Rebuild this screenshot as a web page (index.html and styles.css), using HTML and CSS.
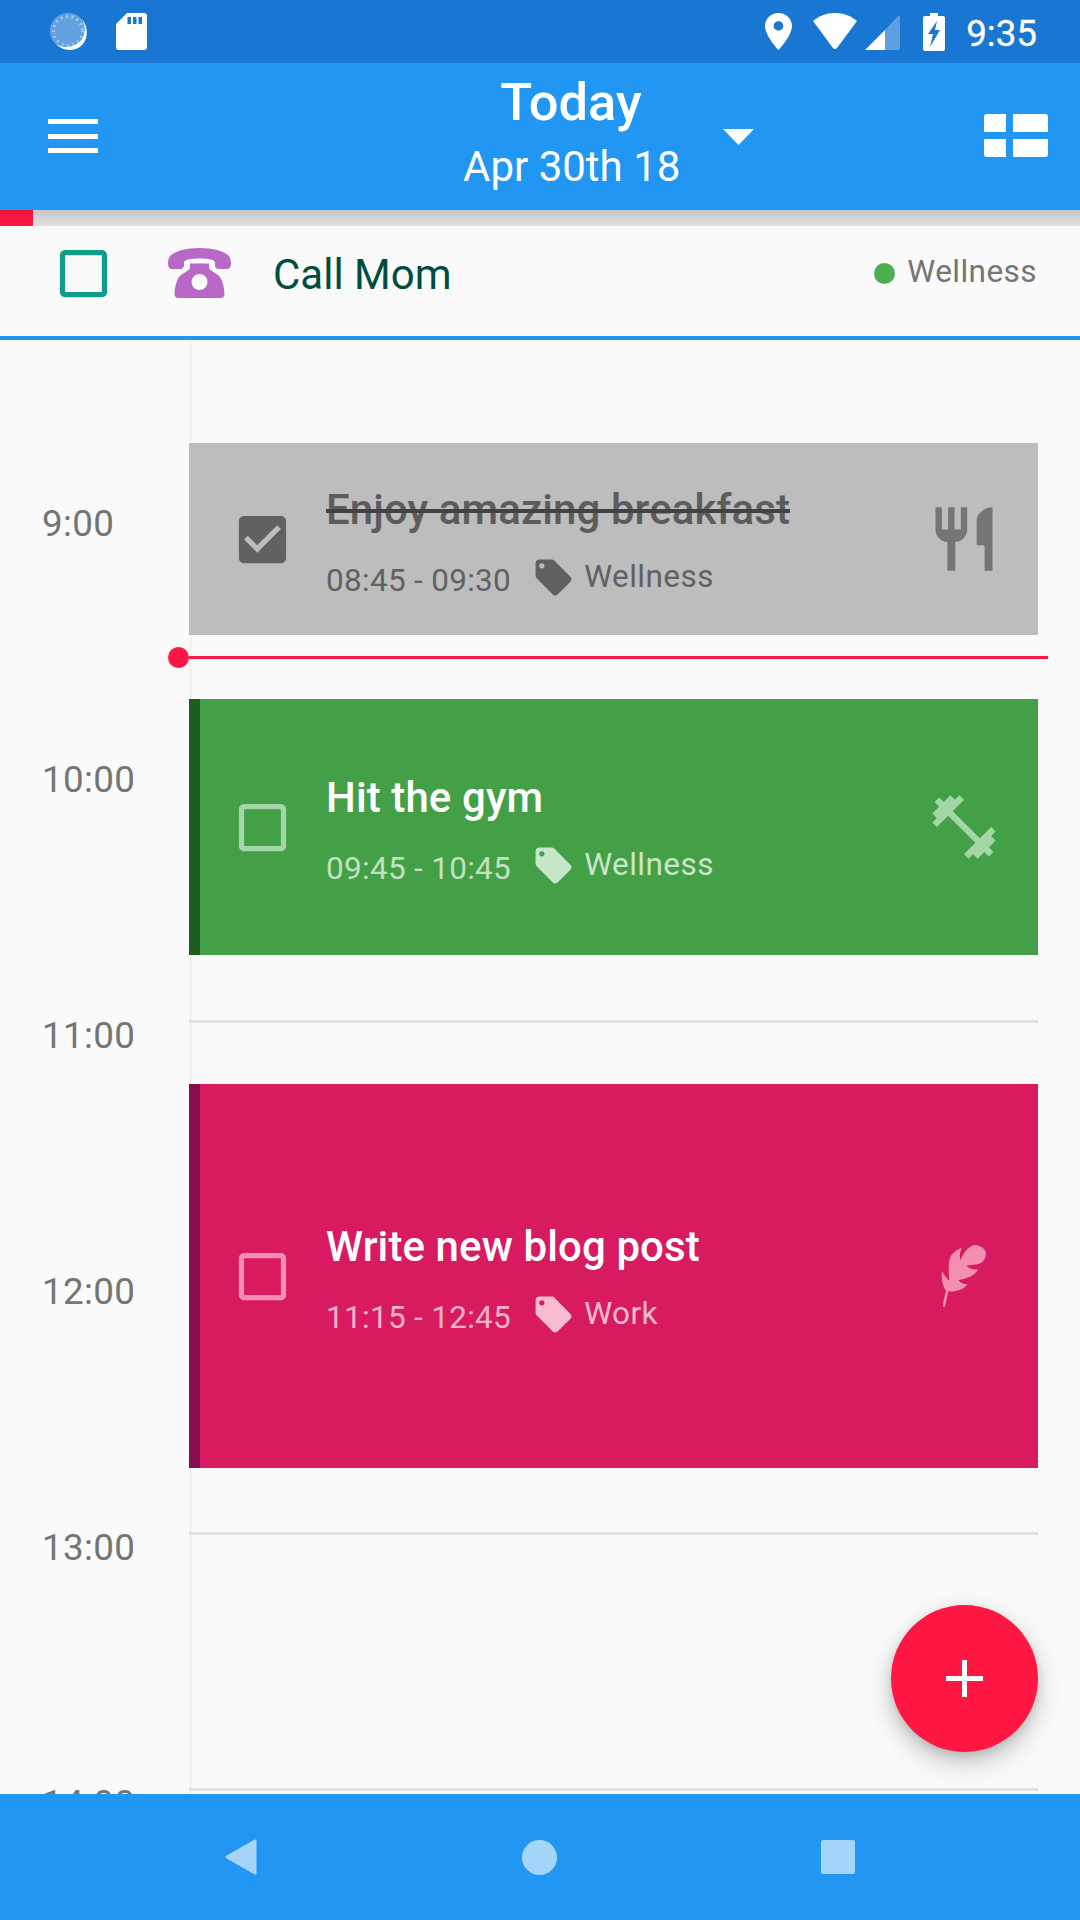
FILE: index.html
```html
<!DOCTYPE html>
<html lang="en">
<head>
<meta charset="utf-8">
<title>Today</title>
<link rel="stylesheet" href="styles.css">
</head>
<body>
<div class="screen">
  <header class="status-bar">
    <svg class="ic-sync" viewBox="0 0 38 38">
      <circle class="sync-disc" cx="18" cy="18" r="18"/>
      <circle class="sync-ticks" cx="18" cy="18" r="14.5"/>
      <path class="sync-moon" d="M32 6C37 15 35 26 27 31 20 35 12 35 6 31 12 38 24 39 31 33 38 27 39 14 32 6Z"/>
    </svg>
    <svg class="ic-sd" viewBox="0 0 31 37">
      <path fill-rule="evenodd" d="M11 0H28a3 3 0 0 1 3 3V34a3 3 0 0 1-3 3H3a3 3 0 0 1-3-3V11ZM11.500 4V11H15V4ZM17 4V11H20.500V4ZM22.500 4V11H26V4Z"/>
    </svg>
    <div class="status-right">
      <svg class="ic-pin" viewBox="5 2 14 20" preserveAspectRatio="none">
        <path d="M12 2C8.130 2 5 5.130 5 9c0 5.250 7 13 7 13s7-7.750 7-13c0-3.870-3.130-7-7-7zm0 9.500c-1.380 0-2.500-1.120-2.500-2.500s1.120-2.500 2.500-2.500 2.500 1.120 2.500 2.500-1.120 2.500-2.500 2.500z"/>
      </svg>
      <div class="radio-group">
        <svg class="ic-wifi" viewBox="0 0 44 37">
          <path d="M22 0C31 0 38 3 44 8L24 35Q22 37 20 35L0 8C6 3 13 0 22 0Z"/>
        </svg>
        <svg class="ic-signal" viewBox="0 0 35 35">
          <path d="M0 35L20 15V35Z"/>
          <path class="signal-dim" d="M20 15L33 1Q35 0 35 2V33Q35 35 33 35H20Z"/>
        </svg>
      </div>
      <svg class="ic-battery" viewBox="0 0 22 38">
        <path fill-rule="evenodd" d="M7 0h8v3h5a2 2 0 0 1 2 2V36a2 2 0 0 1-2 2H2a2 2 0 0 1-2-2V5a2 2 0 0 1 2-2h5ZM14 8L5 21H10L7 34L17 17H12Z"/>
      </svg>
      <span class="clock">9:35</span>
    </div>
  </header>

  <div class="app-bar">
    <div class="menu-icon"><i></i><i></i><i></i></div>
    <div class="title-block">
      <div class="title">Today</div>
      <div class="subtitle">Apr 30th 18</div>
    </div>
    <svg class="ic-drop" viewBox="0 0 31 16"><path d="M0 0H31L15.500 16Z"/></svg>
    <div class="view-icon">
      <i class="narrow tl"></i><i class="wide tr"></i><i class="narrow bl"></i><i class="wide br"></i>
    </div>
  </div>

  <div class="progress-strip"><div class="progress-fill"></div></div>

  <div class="all-day">
    <svg class="check check-teal" viewBox="0 0 24 24">
      <path d="M19 5v14H5V5h14m0-2H5c-1.100 0-2 .9-2 2v14c0 1.100.9 2 2 2h14c1.100 0 2-.9 2-2V5c0-1.100-.9-2-2-2z"/>
    </svg>
    <svg class="ic-phone" viewBox="0 0 63 50">
      <path d="M31.500 0C45 0 56 3 60.500 7.500 62.500 9.500 63 12.500 63 16 63 19 61.500 21 58.500 21H51C48.500 21 47 19.500 47 17V15C47 13 45.500 12 43 11.500 36 10.300 27 10.300 20 11.500 17.500 12 16 13 16 15V17C16 19.500 14.500 21 12 21H4.500C1.500 21 0 19 0 16 0 12.500 .5 9.500 2.500 7.500 7 3 18 0 31.500 0Z"/>
      <path fill-rule="evenodd" d="M22 15.500H41V19.500C41 22 46 24 50 27 54 30 56 38 56.500 46 56.500 49 54.500 50 52 50H11C8.500 50 6.500 49 6.500 46 7 38 9 30 13 27 17 24 22 22 22 19.500ZM31.500 26A8 8 0 1 0 31.500 42 8 8 0 1 0 31.500 26Z"/>
    </svg>
    <span class="all-day-name">Call Mom</span>
    <div class="all-day-tag"><span class="dot-green"></span><span class="all-day-cat">Wellness</span></div>
  </div>
  <div class="all-day-rule"></div>

  <main class="timeline">
    <div class="hour-row"><span class="hour-label">9:00</span><span class="hour-line"></span></div>
    <div class="hour-row"><span class="hour-label">10:00</span><span class="hour-line"></span></div>
    <div class="hour-row"><span class="hour-label">11:00</span><span class="hour-line"></span></div>
    <div class="hour-row"><span class="hour-label">12:00</span><span class="hour-line"></span></div>
    <div class="hour-row"><span class="hour-label">13:00</span><span class="hour-line"></span></div>
    <div class="hour-row"><span class="hour-label">14:00</span><span class="hour-line"></span></div>

    <article class="event event-done">
      <svg class="check" viewBox="0 0 24 24">
        <path d="M19 3H5c-1.110 0-2 .9-2 2v14c0 1.100.89 2 2 2h14c1.110 0 2-.9 2-2V5c0-1.100-.89-2-2-2zm-9 14l-5-5 1.410-1.410L10 14.170l7.590-7.590L19 8l-9 9z"/>
      </svg>
      <div class="event-body">
        <div class="event-title">Enjoy amazing breakfast</div>
        <div class="event-meta">
          <span class="event-time">08:45 - 09:30</span>
          <svg class="ic-tag" viewBox="0 0 24 24"><path d="M21.410 11.580l-9-9C12.050 2.220 11.550 2 11 2H4c-1.100 0-2 .9-2 2v7c0 .55.22 1.050.59 1.420l9 9c.36.36.86.58 1.410.58.55 0 1.050-.22 1.410-.59l7-7c.37-.36.59-.86.59-1.410 0-.55-.23-1.060-.59-1.420zM5.500 7C4.670 7 4 6.330 4 5.500S4.670 4 5.500 4 7 4.670 7 5.500 6.330 7 5.500 7z"/></svg>
          <span class="event-cat">Wellness</span>
        </div>
      </div>
      <svg class="event-icon" viewBox="0 0 24 24"><path d="M11 9H9V2H7v7H5V2H3v7c0 2.120 1.660 3.840 3.750 3.970V22h2.500v-9.030C11.340 12.840 13 11.120 13 9V2h-2v7zm5-3v8h2.500v8H21V2c-2.760 0-5 2.240-5 4z"/></svg>
    </article>

    <div class="now-line"><span class="now-dot"></span><span class="now-rule"></span></div>

    <article class="event event-gym">
      <svg class="check" viewBox="0 0 24 24">
        <path d="M19 5v14H5V5h14m0-2H5c-1.100 0-2 .9-2 2v14c0 1.100.9 2 2 2h14c1.100 0 2-.9 2-2V5c0-1.100-.9-2-2-2z"/>
      </svg>
      <div class="event-body">
        <div class="event-title">Hit the gym</div>
        <div class="event-meta">
          <span class="event-time">09:45 - 10:45</span>
          <svg class="ic-tag" viewBox="0 0 24 24"><path d="M21.410 11.580l-9-9C12.050 2.220 11.550 2 11 2H4c-1.100 0-2 .9-2 2v7c0 .55.22 1.050.59 1.420l9 9c.36.36.86.58 1.410.58.55 0 1.050-.22 1.410-.59l7-7c.37-.36.59-.86.59-1.410 0-.55-.23-1.060-.59-1.420zM5.500 7C4.670 7 4 6.330 4 5.500S4.670 4 5.500 4 7 4.670 7 5.500 6.330 7 5.500 7z"/></svg>
          <span class="event-cat">Wellness</span>
        </div>
      </div>
      <svg class="event-icon" viewBox="0 0 24 24"><path d="M20.570 14.860L22 13.430 20.570 12 17 15.570 8.430 7 12 3.430 10.570 2 9.140 3.430 7.710 2 5.570 4.140 4.140 2.710 2.710 4.140l1.430 1.430L2 7.710l1.430 1.430L2 10.570 3.430 12 7 8.430 15.570 17 12 20.570 13.430 22l1.430-1.430L16.290 22l2.140-2.140 1.430 1.430 1.430-1.430-1.430-1.430L22 16.290z"/></svg>
    </article>

    <article class="event event-work">
      <svg class="check" viewBox="0 0 24 24">
        <path d="M19 5v14H5V5h14m0-2H5c-1.100 0-2 .9-2 2v14c0 1.100.9 2 2 2h14c1.100 0 2-.9 2-2V5c0-1.100-.9-2-2-2z"/>
      </svg>
      <div class="event-body">
        <div class="event-title">Write new blog post</div>
        <div class="event-meta">
          <span class="event-time">11:15 - 12:45</span>
          <svg class="ic-tag" viewBox="0 0 24 24"><path d="M21.410 11.580l-9-9C12.050 2.220 11.550 2 11 2H4c-1.100 0-2 .9-2 2v7c0 .55.22 1.050.59 1.420l9 9c.36.36.86.58 1.410.58.55 0 1.050-.22 1.410-.59l7-7c.37-.36.59-.86.59-1.410 0-.55-.23-1.060-.59-1.420zM5.500 7C4.670 7 4 6.330 4 5.500S4.670 4 5.500 4 7 4.670 7 5.500 6.330 7 5.500 7z"/></svg>
          <span class="event-cat">Work</span>
        </div>
      </div>
      <svg class="event-icon" viewBox="138 111 228 228"><path d="M189 314C190 300 194 285 198 270 188 255 183 235 186 211 192 222 200 232 208 240 206 220 205 195 208 178 212 160 228 148 246 139 240 152 238 165 241 177 250 160 262 135 285 132 300 133 316 142 318 155 318 170 312 180 303 186 290 192 275 192 260 194 265 202 280 206 295 205 285 222 262 234 235 237 240 245 250 250 262 250 252 265 235 270 215 272 211 271 207 270 205 272 202 285 199 300 195 316 193 319 189 318 189 314Z"/></svg>
    </article>

    <button class="fab" type="button" aria-label="Add"><span class="fab-plus"></span></button>
  </main>

  <nav class="nav-bar">
    <svg class="nav-icon" viewBox="0 0 32 36"><path d="M30 2V34L2 18Z"/></svg>
    <span class="nav-circle"></span>
    <span class="nav-square"></span>
  </nav>
</div>
</body>
</html>
```

FILE: styles.css
```css
* { box-sizing: border-box; }

html, body {
  margin: 0;
  padding: 0;
  background: #fafafa;
}

.screen {
  width: 1080px;
  height: 1920px;
  display: flex;
  flex-direction: column;
  overflow: hidden;
  font-family: Roboto, "Noto Sans", sans-serif;
  background: #fafafa;
}

/* status bar */
.status-bar {
  height: 63px;
  flex: none;
  display: flex;
  align-items: center;
  padding: 0 43px 0 50px;
  background: #1976d2;
}
.status-bar svg { fill: #fff; display: block; }
.ic-sync { width: 38px; height: 38px; margin-right: 28px; }
.status-bar .sync-disc { fill: rgba(255, 255, 255, 0.32); }
.status-bar .sync-ticks {
  fill: none;
  stroke: rgba(255, 255, 255, 0.5);
  stroke-width: 3;
  stroke-dasharray: 1.5 4;
}
.ic-sd { width: 31px; height: 37px; }
.status-right {
  margin-left: auto;
  display: flex;
  align-items: center;
  gap: 21px;
}
.ic-pin { width: 27px; height: 37px; }
.radio-group { display: flex; align-items: flex-end; gap: 8px; margin-right: 2px; }
.ic-wifi { width: 44px; height: 37px; }
.ic-signal { width: 35px; height: 35px; }
.status-bar .signal-dim { fill: rgba(255, 255, 255, 0.3); }
.ic-battery { width: 22px; height: 38px; }
.clock { font-size: 36.75px; line-height: 44px; padding-top: 4px; color: #fff; -webkit-text-stroke: 0.3px #fff; }

/* app bar */
.app-bar {
  position: relative;
  z-index: 2;
  height: 147px;
  flex: none;
  display: flex;
  align-items: center;
  padding: 0 32px 0 48px;
  background: #2196f3;
  color: #fff;
}
.menu-icon { width: 50px; display: flex; flex-direction: column; gap: 9.500px; margin-bottom: 1px; }
.menu-icon i { display: block; height: 5px; background: #fff; }
.title-block { width: 216px; margin-left: 365px; text-align: center; padding-bottom: 6px; white-space: nowrap; }
.title { font-size: 52.500px; font-weight: 500; line-height: 60px; }
.subtitle { font-size: 42px; line-height: 56px; margin-top: 7px; }
.ic-drop { width: 31px; height: 16px; fill: #fff; margin-left: 44px; }
.view-icon {
  margin-left: auto;
  margin-bottom: 2px;
  width: 64px;
  display: grid;
  grid-template-columns: 22px 35px;
  grid-template-rows: 18px 18px;
  gap: 7px;
}
.view-icon i { display: block; background: #fff; }
.view-icon .tl { border-top-left-radius: 3px; }
.view-icon .tr { border-top-right-radius: 3px; }
.view-icon .bl { border-bottom-left-radius: 3px; }
.view-icon .br { border-bottom-right-radius: 3px; }

/* progress */
.progress-strip {
  height: 16px;
  flex: none;
  background: linear-gradient(#c6c6c6, #e0e0e0);
}
.progress-fill {
  width: 33px;
  height: 100%;
  background: linear-gradient(#e8173f, #ff1744 60%);
}

/* all-day row */
.all-day {
  height: 110px;
  flex: none;
  display: flex;
  align-items: center;
  padding: 0 43px 16px 52px;
}
.check { width: 63px; height: 63px; flex: none; display: block; }
.check-teal { fill: #0f9d89; }
.ic-phone { width: 63px; height: 50px; fill: #ba68c8; margin-left: 53px; }
.all-day-name { font-size: 42px; line-height: 50px; color: #004d40; margin-left: 42px; padding-top: 4px; }
.all-day-tag {
  margin-left: auto;
  display: flex;
  align-items: center;
  gap: 12px;
  font-size: 31.500px;
  line-height: 40px;
  color: #757575;
}
.all-day-cat { letter-spacing: 0.45px; margin-bottom: 2px; }
.dot-green { width: 21px; height: 21px; border-radius: 50%; background: #4caf50; }
.all-day-rule { height: 4px; flex: none; background: #2196f3; }

/* timeline */
.timeline {
  position: relative;
  flex: 1;
  min-height: 0;
  overflow: hidden;
  padding-top: 168px;
}
.timeline::before {
  content: "";
  position: absolute;
  top: 0;
  bottom: 0;
  left: 189px;
  width: 3px;
  background: #f3f3f3;
}
.hour-row {
  height: 256px;
  display: flex;
  align-items: flex-start;
  padding-right: 42px;
}
.hour-label {
  width: 189px;
  flex: none;
  padding-left: 42px;
  font-size: 36.750px;
  line-height: 32px;
  letter-spacing: 0.35px;
  color: #757575;
}
.hour-line { flex: 1; height: 3px; background: #e0e0e0; position: relative; }

/* events: placed by start time and duration */
.event {
  position: absolute;
  left: 189px;
  right: 42px;
  display: flex;
  align-items: center;
  padding: 0 36px 0 31px;
  border-left: 11px solid transparent;
}
.event-done { top: 103px; height: 192px; background: #bdbdbd; border-left-color: #bdbdbd; }
.event-gym { top: 359px; height: 256px; background: #43a047; border-left-color: #1b5e20; }
.event-work { top: 744px; height: 384px; background: #d81b60; border-left-color: #880e4f; }

.event-body { flex: 1; min-width: 0; padding-top: 8px; margin-left: 32px; }
.event-title { font-size: 42px; font-weight: 500; line-height: 50px; letter-spacing: 0.1px; white-space: nowrap; }
.event-meta { display: flex; align-items: center; margin-top: 23px; height: 44px; font-size: 31.500px; }
.event-time { line-height: 44px; letter-spacing: 0.3px; margin-right: 21px; padding-top: 2px; }
.ic-tag { width: 43px; height: 43px; flex: none; margin-bottom: 4px; }
.event-cat { line-height: 44px; margin-left: 9px; margin-bottom: 5px; letter-spacing: 0.45px; }
.event-icon { width: 76px; height: 76px; flex: none; }

.event-done .check { fill: #616161; }
.event-done .event-title { color: #5c5c5c; text-decoration: line-through; text-decoration-color: #424242; }
.event-done .event-meta { color: #616161; }
.event-done .ic-tag { fill: #616161; }
.event-done .event-icon { fill: #757575; }

.event-gym .check, .event-gym .event-icon { fill: #a5d6a7; }
.event-gym .event-title { color: #fff; }
.event-gym .event-meta { color: #c8e6c9; }
.event-gym .event-time { color: #c0e1c2; }
.event-gym .ic-tag { fill: #c8e6c9; }

.event-work .check, .event-work .event-icon { fill: #f48fb1; }
.event-work .event-title { color: #fff; }
.event-work .event-meta { color: #f8bbd0; }
.event-work .event-time { color: #f5b1c9; }
.event-work .ic-tag { fill: #f8bbd0; }

/* current time marker */
.now-line {
  position: absolute;
  top: 307px;
  left: 168px;
  width: 880px;
  height: 21px;
  display: flex;
  align-items: center;
}
.now-dot { width: 21px; height: 21px; flex: none; border-radius: 50%; background: #ff1744; }
.now-rule { flex: 1; height: 3px; background: #ff1744; }

/* floating action button */
.fab {
  position: absolute;
  right: 42px;
  bottom: 42px;
  width: 147px;
  height: 147px;
  padding: 0;
  border: 0;
  border-radius: 50%;
  background: #ff1744;
  box-shadow: 0 10px 24px rgba(0, 0, 0, 0.24), 0 3px 8px rgba(0, 0, 0, 0.1);
  display: flex;
  align-items: center;
  justify-content: center;
}
.fab-plus {
  display: block;
  width: 37px;
  height: 37px;
  background:
    linear-gradient(#fff, #fff) center / 37px 5px no-repeat,
    linear-gradient(#fff, #fff) center / 5px 37px no-repeat;
}

/* nav bar */
.nav-bar {
  height: 126px;
  flex: none;
  display: flex;
  align-items: center;
  justify-content: center;
  gap: 264px;
  background: #2196f3;
}
.nav-icon { width: 32px; height: 36px; display: block; margin-right: 1px; fill: #a6d5fa; stroke: #a6d5fa; stroke-width: 3; stroke-linejoin: round; }
.nav-circle { width: 35px; height: 35px; border-radius: 50%; background: #a6d5fa; }
.nav-square { width: 34px; height: 34px; border-radius: 2px; background: #a6d5fa; }
```
